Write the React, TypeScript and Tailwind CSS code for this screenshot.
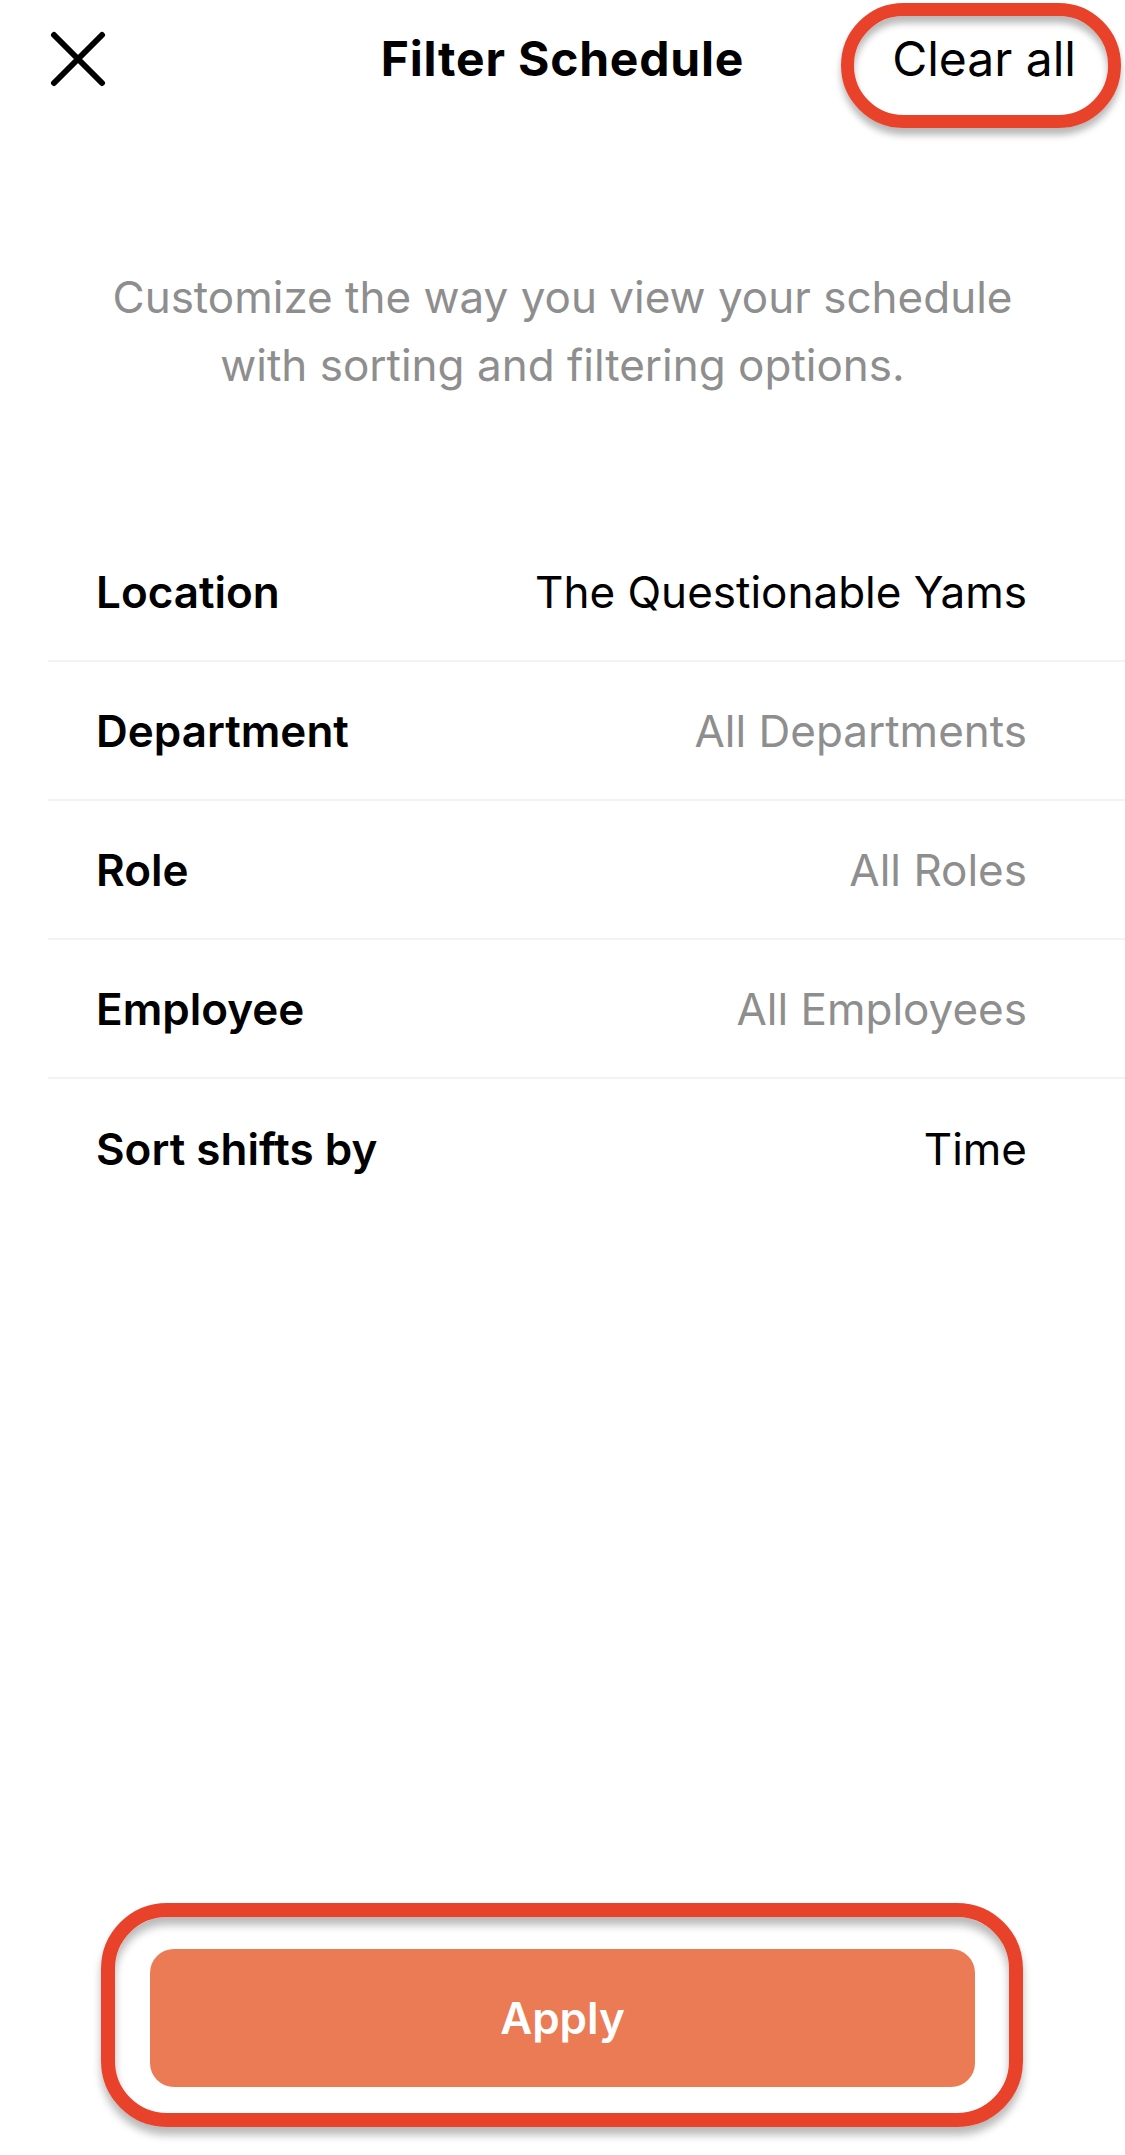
import React from "react";

const rows: { label: string; value: string; muted: boolean }[] = [
  { label: "Location", value: "The Questionable Yams", muted: false },
  { label: "Department", value: "All Departments", muted: true },
  { label: "Role", value: "All Roles", muted: true },
  { label: "Employee", value: "All Employees", muted: true },
  { label: "Sort shifts by", value: "Time", muted: false },
];

export default function App() {
  return (
    <div
      className="flex min-h-[2155px] w-full flex-col bg-white text-black"
      style={{ fontFamily: "Inter, 'Noto Sans', sans-serif" }}
    >
      {/* Header */}
      <div className="relative flex h-[118px] items-center justify-between pl-[50px] pr-[49px]">
        <svg width="56" height="56" viewBox="0 0 56 56" fill="none">
          <path d="M4 4 L52 52 M52 4 L4 52" stroke="#000" strokeWidth="6" strokeLinecap="round" />
        </svg>
        <div className="absolute left-1/2 top-1/2 -translate-x-1/2 -translate-y-1/2 text-[48px] font-bold tracking-[0.8px]">
          Filter Schedule
        </div>
        <div className="relative text-[48px] leading-none">
          Clear all
          <div className="pointer-events-none absolute left-[-51px] right-[-45px] top-[-32px] bottom-[-45px] rounded-full border-[13px] border-[#e8432a] shadow-[0_7px_7px_rgba(0,0,0,0.28),inset_0_7px_7px_rgba(0,0,0,0.28)]" />
        </div>
      </div>

      {/* Subtitle */}
      <div className="mt-[145px] text-center text-[44px] leading-[68px] text-[#8e8e8e]">
        <div>Customize the way you view your schedule</div>
        <div>with sorting and filtering options.</div>
      </div>

      {/* Rows */}
      <div className="ml-[48px] mt-[124px] flex flex-col">
        {rows.map((r, i) => (
          <div
            key={r.label}
            className={
              "flex h-[139px] items-center justify-between pl-[48px] pr-[98px] " +
              (i < rows.length - 1 ? "border-b-2 border-[#f3f3f3]" : "")
            }
          >
            <span className="text-[44px] font-semibold">{r.label}</span>
            <span className={"text-[44px] " + (r.muted ? "text-[#8e8e8e]" : "text-black")}>{r.value}</span>
          </div>
        ))}
      </div>

      <div className="flex-1" />

      {/* Apply */}
      <div className="mb-[68px] flex justify-center">
        <div className="relative">
          <button className="flex h-[138px] w-[825px] items-center justify-center rounded-[24px] bg-[#ea7b55] text-[44px] font-semibold text-white">
            Apply
          </button>
          <div className="pointer-events-none absolute left-[-49px] right-[-48px] top-[-46px] bottom-[-40px] rounded-[66px] border-[14px] border-[#e8432a] shadow-[0_8px_8px_rgba(0,0,0,0.28),inset_0_8px_8px_rgba(0,0,0,0.28)]" />
        </div>
      </div>
    </div>
  );
}
